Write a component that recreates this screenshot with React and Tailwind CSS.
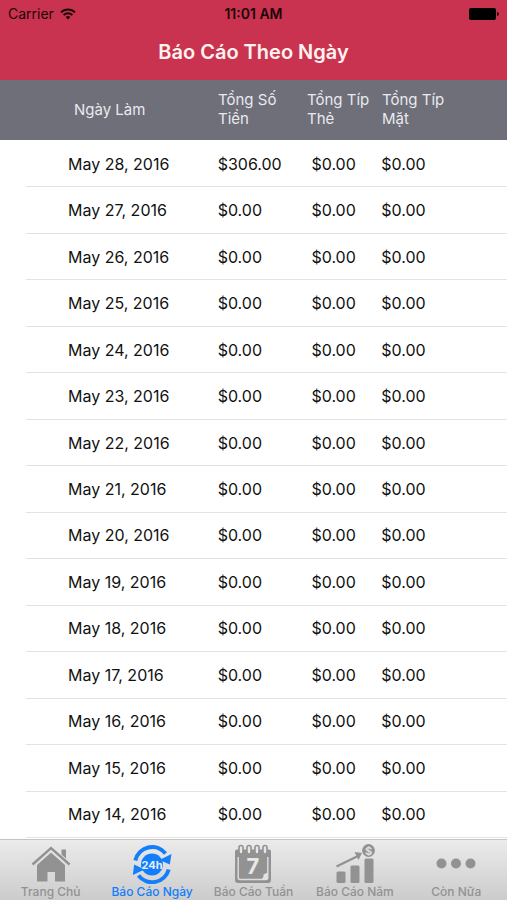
import React, { useState } from 'react';

const DAYS = [28, 27, 26, 25, 24, 23, 22, 21, 20, 19, 18, 17, 16, 15, 14];

const rows = DAYS.map((day) => ({
  date: `May ${day}, 2016`,
  total: day === 28 ? 306 : 0,
  cardTip: 0,
  cashTip: 0,
}));

const money = (val) => '$' + val.toFixed(2);

const WifiIcon = () => (
  <svg width="16" height="12" viewBox="0 0 16 12" fill="none" stroke="currentColor" strokeWidth="2">
    <path d="M1 4.4a10 10 0 0 1 14 0" />
    <path d="M3.6 7.1a6.2 6.2 0 0 1 8.8 0" />
    <path d="M8 11.6 5.6 9.1a3.4 3.4 0 0 1 4.8 0z" fill="currentColor" stroke="none" />
  </svg>
);

const BatteryIcon = () => (
  <svg width="30" height="12" viewBox="0 0 30 12" fill="currentColor">
    <rect x="0" y="0" width="27" height="12" rx="2" />
    <path d="M28 4c1.3 0.3 1.8 1.1 1.8 2s-0.5 1.7-1.8 2z" />
  </svg>
);

const HomeIcon = () => (
  <svg width="40" height="40" viewBox="0 0 40 40" fill="currentColor">
    <path d="M30.5 5.5h4.500v9l-4.500-4z" />
    <path d="M1.500 20.500 20 4l18.500 16.500" fill="none" stroke="currentColor" strokeWidth="2.400" />
    <path d="M20 8.500 34 21v16.500H24V28h-7.500v9.500H6V21z" />
  </svg>
);

const DayIcon = () => (
  <svg width="40" height="40" viewBox="0 0 40 40" fill="currentColor">
    <circle cx="20" cy="20.500" r="11" />
    <path d="M3.300 16.500A17.200 17.200 0 0 1 33.500 9.500" fill="none" stroke="currentColor" strokeWidth="4" />
    <path d="M39.500 10 37.800 20.500 27.500 16z" />
    <path d="M36.700 25.500A17.200 17.200 0 0 1 6.500 31.500" fill="none" stroke="currentColor" strokeWidth="4" />
    <path d="M.8 31 2.200 20.500 12.500 25.500z" />
    <text x="20" y="24.500" textAnchor="middle" fontSize="11" fontWeight="700" fill="#e6f0fc" fontFamily="Inter, sans-serif">
      24h
    </text>
  </svg>
);

const WeekIcon = () => (
  <svg width="40" height="40" viewBox="0 0 40 40" fill="currentColor">
    <path d="M2 7.500a2 2 0 0 1 2-2h32a2 2 0 0 1 2 2V36a3 3 0 0 1-3 3H5a3 3 0 0 1-3-3z" />
    <path d="M5.200 13v20.500a2 2 0 0 0 2 2h25.600a2 2 0 0 0 2-2V13" fill="none" stroke="#dedede" strokeWidth="1.400" />
    <path d="M34.500 28.500v7H27c3.500-.5 3.500-3 3.500-5z" fill="#e2e2e2" />
    {[8, 16, 24, 32].map((x) => (
      <rect key={x} x={x - 2} y="1.500" width="4" height="8.500" rx="2" fill="#e6e6e6" stroke="currentColor" strokeWidth="1.600" />
    ))}
    <text x="20" y="30" textAnchor="middle" fontSize="22" fontWeight="700" fill="#e8e8e8" fontFamily="Inter, sans-serif">
      7
    </text>
  </svg>
);

const YearIcon = () => (
  <svg width="40" height="40" viewBox="0 0 40 40" fill="currentColor">
    <rect x="1.500" y="27.500" width="9" height="11.500" rx="1.500" />
    <rect x="15.500" y="21.500" width="9" height="17.500" rx="1.500" />
    <rect x="29.500" y="14.500" width="9" height="24.500" rx="1.500" />
    <path d="M1.500 22.500 23 12" stroke="currentColor" strokeWidth="2.200" />
    <path d="M19.5 8 27 9 23.500 16z" />
    <circle cx="33.500" cy="6.500" r="6.400" />
    <text x="33.500" y="10.500" textAnchor="middle" fontSize="11" fontWeight="700" fill="#e0e0e0" fontFamily="Inter, sans-serif">
      $
    </text>
  </svg>
);

const MoreIcon = () => (
  <svg width="40" height="40" viewBox="0 0 40 40" fill="currentColor">
    <circle cx="5.500" cy="19.500" r="5" />
    <circle cx="20" cy="19.500" r="5" />
    <circle cx="34.500" cy="19.500" r="5" />
  </svg>
);

const TABS = [
  { id: 'home', label: 'Trang Chủ', Icon: HomeIcon },
  { id: 'day', label: 'Báo Cáo Ngày', Icon: DayIcon },
  { id: 'week', label: 'Báo Cáo Tuần', Icon: WeekIcon },
  { id: 'year', label: 'Báo Cáo Năm', Icon: YearIcon },
  { id: 'more', label: 'Còn Nữa', Icon: MoreIcon },
];

const App = () => {
  const [tab, setTab] = useState('day');

  return (
    <div className="flex min-h-screen flex-col bg-white font-['Inter',sans-serif] text-black">
      <header className="bg-[#c9334f]">
        <div className="grid grid-cols-3 items-center px-2 pt-1 text-sm leading-5 text-[#1c0509]">
          <div className="flex items-center gap-1.5">
            <span>Carrier</span>
            <WifiIcon />
          </div>
          <div className="text-center text-sm leading-5 font-semibold">11:01 AM</div>
          <div className="flex justify-end text-black">
            <BatteryIcon />
          </div>
        </div>
        <h1 className="pt-3.5 pb-3.5 text-center text-xl leading-7 font-semibold text-[#fff3f0]">Báo Cáo Theo Ngày</h1>
      </header>

      <table className="flex flex-1 flex-col">
        <thead className="block bg-[#6e6f79] text-[#e9e9ef]">
          <tr className="grid min-h-15 grid-cols-[144fr_89fr_75fr_125fr] items-center pb-0.5 pl-[74px] text-left text-[15px] leading-[19px]">
            <th className="font-normal">Ngày Làm</th>
            <th className="font-normal">Tổng Số<br />Tiền</th>
            <th className="font-normal">Tổng Típ<br />Thẻ</th>
            <th className="font-normal">Tổng Típ<br />Mặt</th>
          </tr>
        </thead>
        <tbody className="flex flex-1 flex-col pt-px pb-px pl-[26px] text-base leading-5 text-[#111111]">
          {rows.map((row) => (
            <tr
              key={row.date}
              className="grid flex-1 grid-cols-[150fr_94fr_70fr_126fr] items-center border-b border-[#e3e3e5] pl-[42px]"
            >
              <td>{row.date}</td>
              <td>{money(row.total)}</td>
              <td>{money(row.cardTip)}</td>
              <td>{money(row.cashTip)}</td>
            </tr>
          ))}
        </tbody>
      </table>

      <nav className="sticky bottom-0 grid grid-cols-5 border-t border-[#c4c4c4] bg-linear-to-b from-[#ebebeb] to-[#cccccc]">
        {TABS.map(({ id, label, Icon }) => (
          <button
            key={id}
            type="button"
            onClick={() => setTab(id)}
            className={`flex flex-col items-center pt-1 text-xs leading-4 font-medium whitespace-nowrap ${
              tab === id ? 'text-[#127efb]' : 'text-[#929292]'
            }`}
          >
            <Icon />
            {label}
          </button>
        ))}
      </nav>
    </div>
  );
};

export default App;
